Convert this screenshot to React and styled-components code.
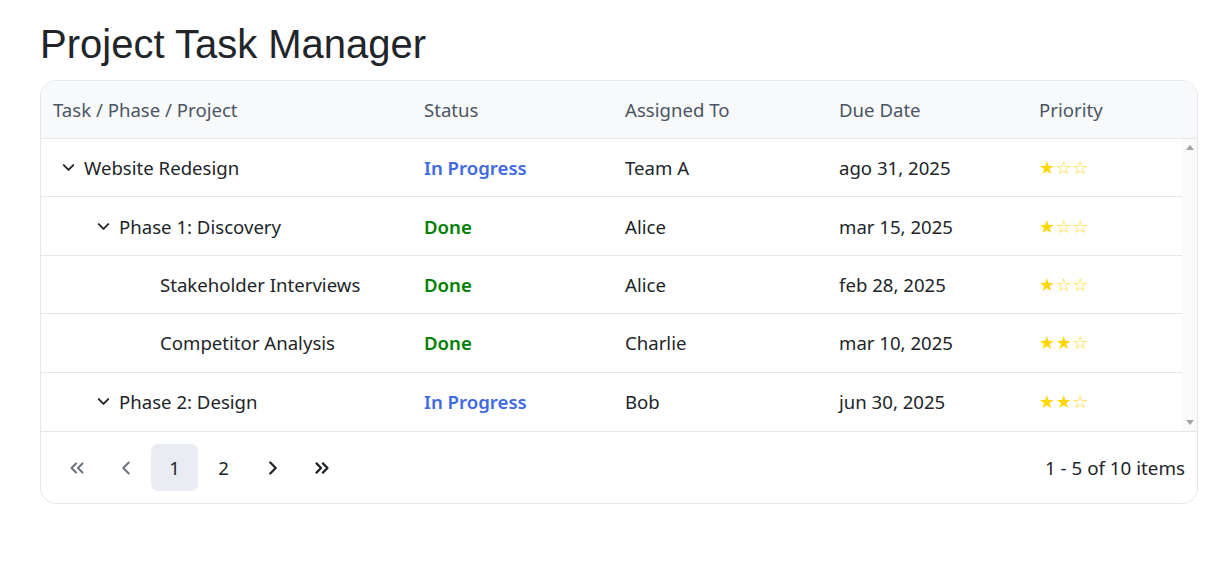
import React from 'react';
import styled, { createGlobalStyle } from 'styled-components';
import { ChevronDown, ChevronLeft, ChevronRight, ChevronsLeft, ChevronsRight } from 'lucide-react';

const GlobalStyle = createGlobalStyle`
    html, body {
        margin: 0;
        padding: 0;
        background: #fff;
    }
    body {
        font-family: "Noto Sans", "Open Sans", sans-serif;
        color: #212529;
    }
`;

const Page = styled.div`
    padding: 20px 28px 0 40px;
`;

const Title = styled.h1`
    margin: 0 0 11px;
    font-family: "Liberation Sans", Arial, sans-serif;
    font-size: 40px;
    font-weight: 400;
    line-height: 49px;
    color: #212529;
`;

const Card = styled.div`
    border: 1px solid #e3e6eb;
    border-radius: 16px;
    overflow: hidden;
    background: #fff;
`;

const columns = '371px 201px 214px 200px 1fr';

const HeaderRow = styled.div`
    display: grid;
    grid-template-columns: ${columns};
    height: 57px;
    align-items: center;
    background: #f8f9fb;
    border-bottom: 1px solid #e3e6eb;
`;

const HeaderCell = styled.div`
    padding-left: 12px;
    font-size: 18.6px;
    color: #4b5563;
`;

const Body = styled.div`
    display: flex;
    height: 292px;
`;

const Rows = styled.div`
    flex: 1;
`;

const ScrollTrack = styled.div`
    width: 15px;
    display: flex;
    flex-direction: column;
    justify-content: space-between;
    align-items: center;
    padding: 6px 0;
    box-sizing: border-box;
    background: #fafafa;
`;

const Arrow = styled.span`
    width: 0;
    height: 0;
    border-left: 4px solid transparent;
    border-right: 4px solid transparent;
    ${(p) => (p.$up ? 'border-bottom: 5px solid #a3a3a3;' : 'border-top: 5px solid #a3a3a3;')}
`;

const Row = styled.div`
    display: grid;
    grid-template-columns: ${columns};
    height: 58.4px;
    box-sizing: border-box;
    align-items: center;
    border-bottom: 1px solid #e5e7eb;
    &:last-child {
        border-bottom: none;
    }
`;

const Cell = styled.div`
    padding-left: 12px;
    font-size: 18.6px;
    color: #212529;
    white-space: nowrap;
`;

const NameCell = styled(Cell)`
    display: flex;
    align-items: center;
    padding-left: ${(p) => 12 + p.$indent}px;
`;

const Expander = styled.span`
    display: inline-flex;
    width: 31px;
    flex-shrink: 0;
    padding-left: 6px;
    box-sizing: border-box;
    color: #212529;
`;

const Status = styled(Cell)`
    font-weight: 600;
    color: ${(p) => (p.$done ? '#008000' : '#4169e1')};
`;

const Stars = styled(Cell)`
    font-family: "DejaVu Sans", sans-serif;
    font-size: 18px;
    color: #ffd700;
    letter-spacing: 0.5px;
`;

const Pager = styled.div`
    display: flex;
    align-items: center;
    justify-content: space-between;
    height: 71px;
    padding: 0 12px;
    border-top: 1px solid #e3e6eb;
`;

const PagerButtons = styled.div`
    display: flex;
    align-items: center;
    gap: 2px;
`;

const PageButton = styled.button`
    display: inline-flex;
    align-items: center;
    justify-content: center;
    width: 47px;
    height: 47px;
    border: none;
    border-radius: 7px;
    padding: 0;
    font-family: "Noto Sans", sans-serif;
    font-size: 18.6px;
    color: ${(p) => (p.$disabled ? '#6b7280' : '#212529')};
    background: ${(p) => (p.$active ? '#e9ecf3' : 'transparent')};
    cursor: pointer;
`;

const PagerInfo = styled.div`
    font-size: 18.8px;
    color: #212529;
`;

const rows = [
    { name: 'Website Redesign', indent: 0, expand: true, status: 'In Progress', who: 'Team A', due: 'ago 31, 2025', prio: 1 },
    { name: 'Phase 1: Discovery', indent: 35, expand: true, status: 'Done', who: 'Alice', due: 'mar 15, 2025', prio: 1 },
    { name: 'Stakeholder Interviews', indent: 76, expand: false, status: 'Done', who: 'Alice', due: 'feb 28, 2025', prio: 1 },
    { name: 'Competitor Analysis', indent: 76, expand: false, status: 'Done', who: 'Charlie', due: 'mar 10, 2025', prio: 2 },
    { name: 'Phase 2: Design', indent: 35, expand: true, status: 'In Progress', who: 'Bob', due: 'jun 30, 2025', prio: 2 },
];

const stars = (n) => '★'.repeat(n) + '☆'.repeat(3 - n);

const App = () => {
    return (
        <Page>
            <GlobalStyle />
            <Title>Project Task Manager</Title>
            <Card>
                <HeaderRow>
                    <HeaderCell>Task / Phase / Project</HeaderCell>
                    <HeaderCell>Status</HeaderCell>
                    <HeaderCell>Assigned To</HeaderCell>
                    <HeaderCell>Due Date</HeaderCell>
                    <HeaderCell>Priority</HeaderCell>
                </HeaderRow>
                <Body>
                    <Rows>
                        {rows.map((r) => (
                            <Row key={r.name}>
                                <NameCell $indent={r.indent}>
                                    <Expander>
                                        {r.expand && <ChevronDown size={19} strokeWidth={2.4} />}
                                    </Expander>
                                    {r.name}
                                </NameCell>
                                <Status $done={r.status === 'Done'}>{r.status}</Status>
                                <Cell>{r.who}</Cell>
                                <Cell>{r.due}</Cell>
                                <Stars>{stars(r.prio)}</Stars>
                            </Row>
                        ))}
                    </Rows>
                    <ScrollTrack>
                        <Arrow $up />
                        <Arrow />
                    </ScrollTrack>
                </Body>
                <Pager>
                    <PagerButtons>
                        <PageButton $disabled><ChevronsLeft size={22} strokeWidth={2.2} /></PageButton>
                        <PageButton $disabled><ChevronLeft size={22} strokeWidth={2.2} /></PageButton>
                        <PageButton $active>1</PageButton>
                        <PageButton>2</PageButton>
                        <PageButton><ChevronRight size={22} strokeWidth={2.5} /></PageButton>
                        <PageButton><ChevronsRight size={22} strokeWidth={2.5} /></PageButton>
                    </PagerButtons>
                    <PagerInfo>1 - 5 of 10 items</PagerInfo>
                </Pager>
            </Card>
        </Page>
    );
};

export default App;
